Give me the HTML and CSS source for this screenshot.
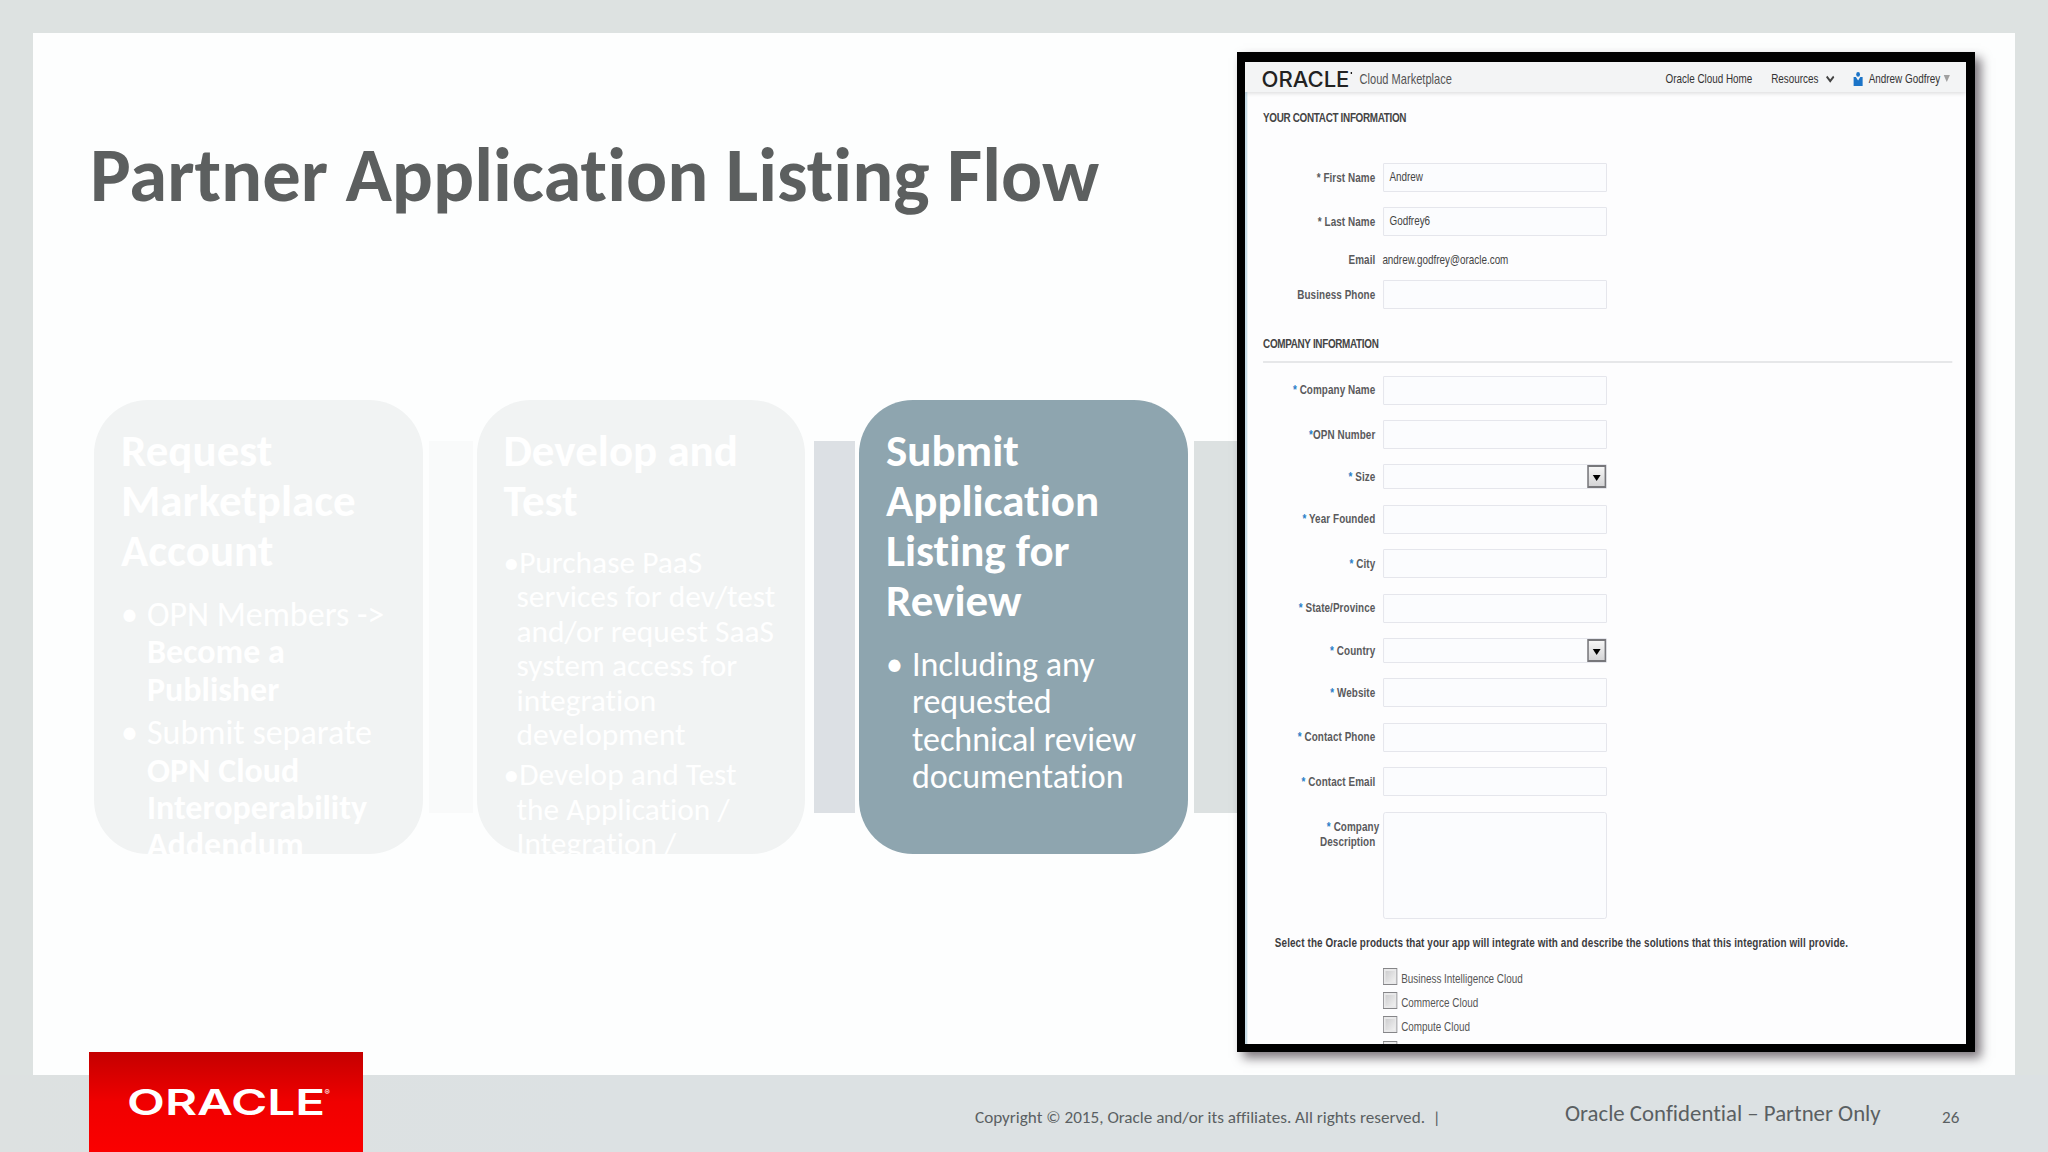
FILE: index.html
```
<!DOCTYPE html>
<html lang="en">
<head>
    <meta charset="UTF-8">
    <meta name="viewport" content="width=device-width, initial-scale=1.0">
    <title>Partner Application Listing Flow</title>
    <link rel="stylesheet" href="styles.css">
</head>
<body>
    <main class="slide">
        <section class="content">
            <h1>Partner Application Listing Flow</h1>

            <div class="flow">
                <div class="card faded">
                    <h2>Request<br>Marketplace<br>Account</h2>
                    <ul>
                        <li>OPN Members -&gt;<br><b>Become a<br>Publisher</b></li>
                        <li>Submit separate<br><b>OPN Cloud<br>Interoperability<br>Addendum</b></li>
                    </ul>
                </div>
                <div class="link link-light"></div>
                <div class="card faded">
                    <h2>Develop and<br>Test</h2>
                    <ul class="tight">
                        <li>Purchase PaaS<br>services for dev/test<br>and/or request SaaS<br>system access for<br>integration<br>development</li>
                        <li>Develop and Test<br>the Application /<br>Integration /</li>
                    </ul>
                </div>
                <div class="link link-blue"></div>
                <div class="card">
                    <h2>Submit<br>Application<br>Listing for<br>Review</h2>
                    <ul>
                        <li>Including any<br>requested<br>technical review<br>documentation</li>
                    </ul>
                </div>
                <div class="link link-last"></div>
            </div>
        </section>

        <section class="shot">
            <div class="page">
                <header class="topbar">
                    <svg class="brand" width="116" height="18" viewBox="0 0 116 18">
                        <text x="0" y="16.5" textLength="112" lengthAdjust="spacingAndGlyphs">ORACLE</text>
                        <circle cx="114.5" cy="3" r="1" />
                    </svg>
                    <span class="product">Cloud Marketplace</span>
                    <nav>
                        <span>Oracle Cloud Home</span>
                        <span class="resources">Resources
                            <svg width="11" height="8" viewBox="0 0 11 8"><path d="M1 1.5 L5.5 6 L10 1.5" fill="none" stroke="#444" stroke-width="2.4" /></svg>
                        </span>
                        <span class="user">
                            <svg width="12" height="14" viewBox="0 0 12 14"><circle cx="6" cy="2.4" r="2.4" fill="#1b74c8" /><path d="M0 5 H3.2 L6 8.4 L8.8 5 H12 V14 H0 Z" fill="#1b74c8" /></svg>
                            Andrew Godfrey
                            <svg class="caret" width="8" height="7" viewBox="0 0 8 7"><path d="M0 0 H8 L4 7 Z" fill="#a0a0a0" /></svg>
                        </span>
                    </nav>
                </header>

                <div class="form">
                    <h3>YOUR CONTACT INFORMATION</h3>
                    <div class="rows contact">
                        <div class="row"><label>* First Name</label><div class="input">Andrew</div></div>
                        <div class="row"><label>* Last Name</label><div class="input">Godfrey6</div></div>
                        <div class="row email"><label>Email</label><span>andrew.godfrey@oracle.com</span></div>
                        <div class="row"><label>Business Phone</label><div class="input"></div></div>
                    </div>

                    <h3 class="ruled">COMPANY INFORMATION</h3>
                    <div class="rows company">
                        <div class="row"><label><i>*</i> Company Name</label><div class="input"></div></div>
                        <div class="row"><label><i>*</i>OPN Number</label><div class="input"></div></div>
                        <div class="row"><label><i>*</i> Size</label><div class="select"><span class="arrow"></span></div></div>
                        <div class="row"><label><i>*</i> Year Founded</label><div class="input"></div></div>
                        <div class="row"><label><i>*</i> City</label><div class="input"></div></div>
                        <div class="row"><label><i>*</i> State/Province</label><div class="input"></div></div>
                        <div class="row"><label><i>*</i> Country</label><div class="select"><span class="arrow"></span></div></div>
                        <div class="row"><label><i>*</i> Website</label><div class="input"></div></div>
                        <div class="row"><label><i>*</i> Contact Phone</label><div class="input"></div></div>
                        <div class="row"><label><i>*</i> Contact Email</label><div class="input"></div></div>
                        <div class="row top"><label><span class="hang"><i>*</i> Company</span><br>Description</label><div class="textarea"></div></div>
                    </div>

                    <p class="question">Select the Oracle products that your app will integrate with and describe the solutions that this integration will provide.</p>
                    <div class="checks">
                        <div class="check"><span class="box"></span><span>Business Intelligence Cloud</span></div>
                        <div class="check"><span class="box"></span><span>Commerce Cloud</span></div>
                        <div class="check"><span class="box"></span><span>Compute Cloud</span></div>
                        <div class="check"><span class="box"></span></div>
                    </div>
                </div>
            </div>
        </section>
    </main>

    <footer>
        <div class="logo">
            <svg width="274" height="100" viewBox="0 0 274 100">
                <text x="38" y="62.5" textLength="198" lengthAdjust="spacingAndGlyphs">ORACLE</text>
                <text class="reg" x="235.5" y="43">®</text>
            </svg>
        </div>
        <span class="copyright">Copyright © 2015, Oracle and/or its affiliates. All rights reserved. &nbsp;|</span>
        <span class="confidential">Oracle Confidential – Partner Only</span>
        <span class="number">26</span>
    </footer>
</body>
</html>
```
FILE: styles.css
```
* {
    box-sizing: border-box;
}

body {
    margin: 0;
    width: 2048px;
    height: 1152px;
    overflow: hidden;
    background: #dde2e1;
    font-family: Calibri, Carlito, Lato, sans-serif;
    font-variant-ligatures: none;
}

h1, h2, h3, p, ul {
    margin: 0;
    padding: 0;
}

.slide {
    display: flex;
    width: 1982px;
    height: 1042px;
    margin: 33px 33px 0;
    background: #fdfefe;
}

.content {
    width: 1204px;
    padding-top: 97px;
    overflow: hidden;
    white-space: nowrap;
}

h1 {
    padding-left: 57px;
    font-size: 76.7px;
    line-height: 90px;
    color: #5c5f5f;
}

/* flow diagram */
.flow {
    display: flex;
    align-items: center;
    margin-top: 180px;
    padding-left: 61px;
}

.card {
    flex: none;
    width: 328.5px;
    height: 454px;
    padding: 26px 0 0 27px;
    border-radius: 54px;
    overflow: hidden;
    background: #8ea5af;
    color: #fff;
}

.faded {
    background: #f1f3f3;
}

.card h2 {
    font-size: 45px;
    line-height: 50px;
}

.card ul {
    margin-top: 20px;
    list-style: none;
    font-size: 34px;
    line-height: 37.4px;
}

.card li {
    margin-bottom: 6px;
    padding-left: 26px;
}

.card li::before {
    content: "•";
    display: inline-block;
    width: 26px;
    margin-left: -26px;
}

.card .tight {
    margin-top: 19px;
    font-size: 31.4px;
    line-height: 34.4px;
}

.tight li {
    padding-left: 13px;
}

.card .tight li::before {
    width: auto;
    margin-left: -13px;
}

.link {
    flex: none;
    width: 44px;
    height: 372px;
    margin: 0 4px 0 6px;
}

.link-light {
    background: #f9fafa;
}

.link-blue {
    width: 41px;
    margin-left: 9px;
    background: #dce0e4;
}

.link-last {
    width: 60px;
    margin-right: 0;
    background: #dce1e1;
}

/* marketplace form */
.shot {
    flex: none;
    width: 738px;
    height: 1000px;
    margin-top: 19px;
    border: solid #000;
    border-width: 10px 9px 8px 8px;
    background: #fdfdfe;
    box-shadow: 6px 6px 10px rgba(40, 30, 40, 0.6);
    overflow: hidden;
}

/* everything inside is laid out wide and squeezed to the frame */
.page {
    width: 918.5px;
    height: 982px;
    transform: scaleX(0.785);
    transform-origin: 0 0;
    overflow: hidden;
    font-family: "Liberation Sans", Arial, sans-serif;
    font-size: 12.6px;
    line-height: 16px;
    color: #444;
    white-space: nowrap;
}

.topbar {
    display: flex;
    align-items: center;
    height: 30px;
    padding: 3px 21px 0 21px;
    background: #f3f4f5;
    box-shadow: 0 1px 5px rgba(0, 0, 0, 0.15);
    position: relative;
}

.brand {
    overflow: visible;
}

.brand text {
    font-family: Inter, sans-serif;
    font-size: 21px;
    font-weight: 500;
    fill: #222;
}

.product {
    margin-left: 9px;
    padding-top: 1px;
    font-size: 14.1px;
    color: #555;
}

nav {
    display: flex;
    align-items: center;
    gap: 24px;
    margin-left: auto;
    color: #333;
}

.resources, .user {
    display: flex;
    align-items: center;
    gap: 9px;
}

.user {
    gap: 8px;
}

.caret {
    margin-left: -4px;
}

.form {
    height: 952px;
    padding: 18px 18px 0 20px;
    border-left: 3px solid #c9dde8;
}

h3 {
    font-size: 12.6px;
    line-height: 16px;
    letter-spacing: -0.4px;
    color: #444;
}

.ruled {
    margin-top: 26.5px;
    padding-bottom: 9px;
    border-bottom: 2px solid #e6e7e9;
}

.rows {
    display: flex;
    flex-direction: column;
    gap: 15.4px;
}

.contact {
    margin-top: 37px;
}

.company {
    margin-top: 13px;
}

.row {
    display: grid;
    grid-template-columns: 143px 285px;
    column-gap: 10px;
    align-items: center;
}

.row label {
    text-align: right;
    font-weight: bold;
    letter-spacing: 0.1px;
    color: #5a5a5c;
}

.row i {
    font-style: normal;
    color: #2b7fc8;
}

.input, .select, .textarea {
    height: 29px;
    padding: 0 7px;
    border: 1.3px solid #e2e3ea;
    border-radius: 1px;
    background: #fbfcfe;
    line-height: 27px;
}

.select {
    display: flex;
    justify-content: flex-end;
    height: 25px;
    padding: 0;
}

.arrow {
    display: flex;
    align-items: center;
    justify-content: center;
    width: 24px;
    border: 2px solid #77777b;
    background: linear-gradient(#f6f6f6, #d4d4d6);
}

.arrow::before {
    content: "";
    margin-top: 3px;
    border: solid transparent;
    border-width: 6px 5px 0;
    border-top-color: #000;
}

.email {
    height: 13px;
}

.email span {
    margin-left: -1px;
}

.top {
    align-items: start;
}

.top label {
    padding-top: 8px;
    line-height: 15px;
}

.hang {
    margin-right: -5px;
}

.textarea {
    height: 107px;
    border-radius: 3px;
}

.question {
    margin: 16.5px 0 0 15px;
    font-weight: bold;
    letter-spacing: 0.145px;
    color: #3c3c40;
}

.checks {
    display: flex;
    flex-direction: column;
    gap: 7.2px;
    margin: 17px 0 0 153px;
    color: #555;
}

.check {
    display: flex;
    gap: 5px;
    height: 17px;
}

.check span:last-child {
    padding-top: 2.5px;
}

.check .box {
    width: 18px;
    height: 17px;
    padding: 0;
    border: 1.5px solid #858588;
    background: linear-gradient(135deg, #c8c8ca, #f6f6f6);
    box-shadow: inset 0 0 0 2px #e9e9ea;
}

/* slide footer */
footer {
    display: flex;
    align-items: flex-start;
    height: 77px;
    background: linear-gradient(to right, #dde1e1, #dce1e3 30%);
    color: #5a5f62;
    white-space: nowrap;
}

.logo {
    width: 274px;
    height: 100px;
    margin: -23px 0 0 89px;
    background: linear-gradient(#c40000, #f00000 50%, #fb0000);
}

.logo text {
    font-family: Inter, sans-serif;
    font-size: 35.5px;
    font-weight: 600;
    fill: #fff;
}

.logo .reg {
    font-size: 8px;
    font-weight: 400;
}

.copyright {
    width: 590px;
    margin: 32.5px 0 0 612px;
    font-size: 17.15px;
    line-height: 20px;
}

.confidential {
    width: 377px;
    margin-top: 22.5px;
    font-size: 22.8px;
    line-height: 30px;
}

.number {
    margin-top: 32.5px;
    font-size: 17.1px;
    line-height: 20px;
}
```
